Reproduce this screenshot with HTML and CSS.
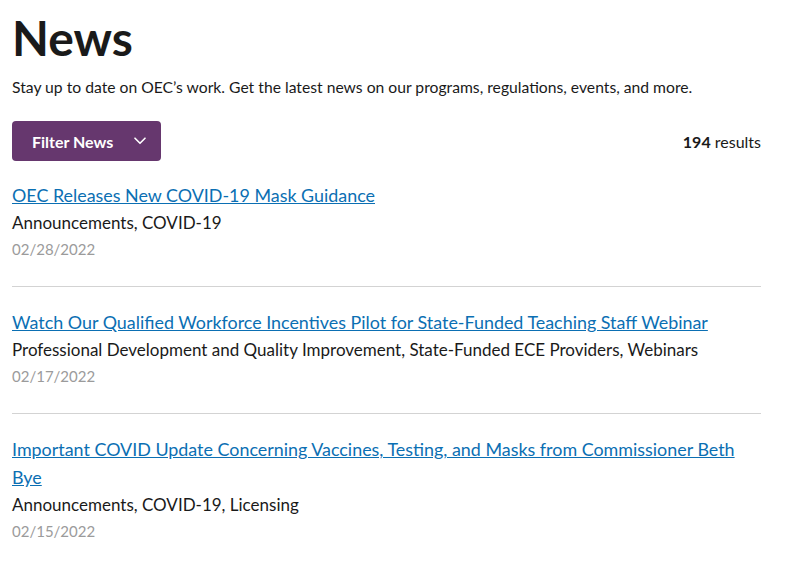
FILE: index.html
```html
<!DOCTYPE html>
<html lang="en">
<head>
  <meta charset="UTF-8" />
  <meta name="viewport" content="width=device-width, initial-scale=1.0"/>
  <title>News - OEC</title>
  <link rel="stylesheet" href="styles.css">
</head>
<body>
  <main class="news">
    <h1>News</h1>
    <p class="intro">Stay up to date on OEC’s work. Get the latest news on our programs, regulations, events, and more.</p>

    <div class="toolbar">
      <button class="filter-btn">
        Filter News
        <svg width="12" height="8" viewBox="0 0 12 8" aria-hidden="true">
          <path d="M1 1.2 L6 6.3 L11 1.2" fill="none" stroke="white" stroke-width="1.6" stroke-linecap="round" stroke-linejoin="round"/>
        </svg>
      </button>
      <div class="count"><strong>194</strong> results</div>
    </div>

    <ul class="results">
      <li class="item">
        <a href="#">OEC Releases New COVID-19 Mask Guidance</a>
        <div class="tags">Announcements, COVID-19</div>
        <div class="date">02/28/2022</div>
      </li>
      <li class="item">
        <a href="#">Watch Our Qualified Workforce Incentives Pilot for State-Funded Teaching Staff Webinar</a>
        <div class="tags">Professional Development and Quality Improvement, State-Funded ECE Providers, Webinars</div>
        <div class="date">02/17/2022</div>
      </li>
      <li class="item">
        <a href="#">Important COVID Update Concerning Vaccines, Testing, and Masks from Commissioner Beth Bye</a>
        <div class="tags">Announcements, COVID-19, Licensing</div>
        <div class="date">02/15/2022</div>
      </li>
    </ul>
  </main>
</body>
</html>
```

FILE: styles.css
```css
body {
  margin: 0;
  padding: 0;
  font-family: Lato, "Open Sans", sans-serif;
  color: #1a1a1a;
  background: white;
}
.news {
  width: 749px;
  padding: 0 12px;
}
h1 {
  margin: 8px 0 0;
  font-size: 48px;
  line-height: 60px;
  font-weight: 700;
}
.intro {
  margin: 7px 0 0;
  font-size: 15.7px;
  line-height: 24px;
}
.toolbar {
  display: flex;
  justify-content: space-between;
  align-items: center;
  margin-top: 22px;
}
.filter-btn {
  display: flex;
  align-items: center;
  gap: 21px;
  height: 40px;
  padding: 0 15px 0 20px;
  background: #66376e;
  color: white;
  border: none;
  border-radius: 4px;
  font-family: inherit;
  font-size: 16px;
  font-weight: 700;
  cursor: pointer;
}
.count {
  font-size: 16px;
}
.results {
  list-style: none;
  margin: 20px 0 0;
  padding: 0;
}
.item {
  padding: 0 0 24px;
  border-bottom: 1px solid #d3d3d3;
  margin-bottom: 21px;
}
.item:last-child {
  border-bottom: none;
}
.item a {
  color: #0b6fb3;
  font-size: 17.9px;
  line-height: 28px;
}
.tags {
  font-size: 17px;
  line-height: 27px;
}
.date {
  color: #9b9b9b;
  font-size: 15px;
  line-height: 26px;
}
```
